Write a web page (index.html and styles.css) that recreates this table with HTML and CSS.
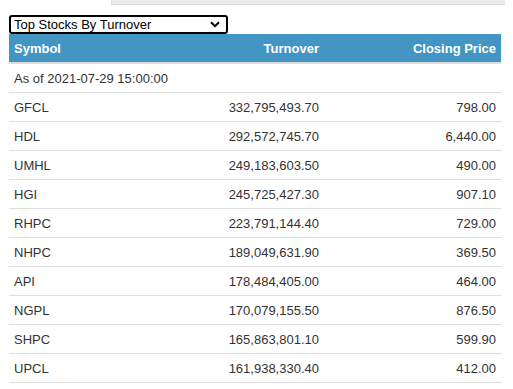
FILE: index.html
```html
<!DOCTYPE html>
<html>
<head>
<meta charset="utf-8">
<link rel="stylesheet" href="styles.css">
</head>
<body>
<div class="tabs">
  <div class="tab active"></div>
  <div class="tab rest"></div>
</div>
<div class="panel">
  <div class="picker-wrap">
    <select class="picker">
      <option>Top Stocks By Turnover</option>
    </select>
    <svg class="chev" width="10" height="7" viewBox="0 0 10 7"><path d="M1 1.2 L5 5.2 L9 1.2" fill="none" stroke="#000" stroke-width="2"/></svg>
  </div>
  <table class="stocks">
    <colgroup>
      <col class="c-sym"><col class="c-turn"><col class="c-close">
    </colgroup>
    <thead>
      <tr><th class="left">Symbol</th><th>Turnover</th><th>Closing Price</th></tr>
    </thead>
    <tbody>
      <tr><td class="left" colspan="3">As of 2021-07-29 15:00:00</td></tr>
      <tr><td class="left">GFCL</td><td>332,795,493.70</td><td>798.00</td></tr>
      <tr><td class="left">HDL</td><td>292,572,745.70</td><td>6,440.00</td></tr>
      <tr><td class="left">UMHL</td><td>249,183,603.50</td><td>490.00</td></tr>
      <tr><td class="left">HGI</td><td>245,725,427.30</td><td>907.10</td></tr>
      <tr><td class="left">RHPC</td><td>223,791,144.40</td><td>729.00</td></tr>
      <tr><td class="left">NHPC</td><td>189,049,631.90</td><td>369.50</td></tr>
      <tr><td class="left">API</td><td>178,484,405.00</td><td>464.00</td></tr>
      <tr><td class="left">NGPL</td><td>170,079,155.50</td><td>876.50</td></tr>
      <tr><td class="left">SHPC</td><td>165,863,801.10</td><td>599.90</td></tr>
      <tr><td class="left">UPCL</td><td>161,938,330.40</td><td>412.00</td></tr>
    </tbody>
  </table>
</div>
</body>
</html>
```

FILE: styles.css
```css
html, body {
  margin: 0;
  padding: 0;
  background: #fff;
  font-family: "Liberation Sans", Arial, sans-serif;
  font-size: 13px;
  color: #333;
}
.tabs {
  display: flex;
  height: 5px;
  width: 505px;
}
.tab.active {
  width: 111px;
  background: #fff;
}
.tab.rest {
  flex: 1;
  background: #ebebeb;
  border-bottom: 1px solid #dcdcdc;
  border-left: 1px solid #dcdcdc;
}
.panel {
  padding: 10px 12px 0 9px;
}
.picker-wrap {
  position: relative;
  width: 219px;
  height: 19px;
}
.picker {
  display: block;
  width: 219px;
  height: 19px;
  margin: 0;
  padding: 0 2px 0 3px;
  font-family: "Liberation Sans", Arial, sans-serif;
  font-size: 13px;
  color: #000;
  background: #fff;
  border: 2px solid #000;
  border-radius: 3px;
  outline: none;
  -webkit-appearance: none;
  appearance: none;
}
.chev {
  position: absolute;
  right: 8px;
  top: 6px;
  pointer-events: none;
}
.stocks {
  width: 492px;
  border-collapse: collapse;
  table-layout: fixed;
}
.c-sym { width: 130px; }
.c-turn { width: 185px; }
.c-close { width: 177px; }
.stocks th {
  background: #4396c4;
  color: #fff;
  font-weight: bold;
  text-align: right;
  height: 28px;
  padding: 0 5px;
  border-bottom: 2px solid #dddddd;
}
.stocks td {
  height: 28px;
  padding: 0 5px;
  text-align: right;
  border-bottom: 1px solid #dddddd;
}
.stocks .left {
  text-align: left;
}
```
